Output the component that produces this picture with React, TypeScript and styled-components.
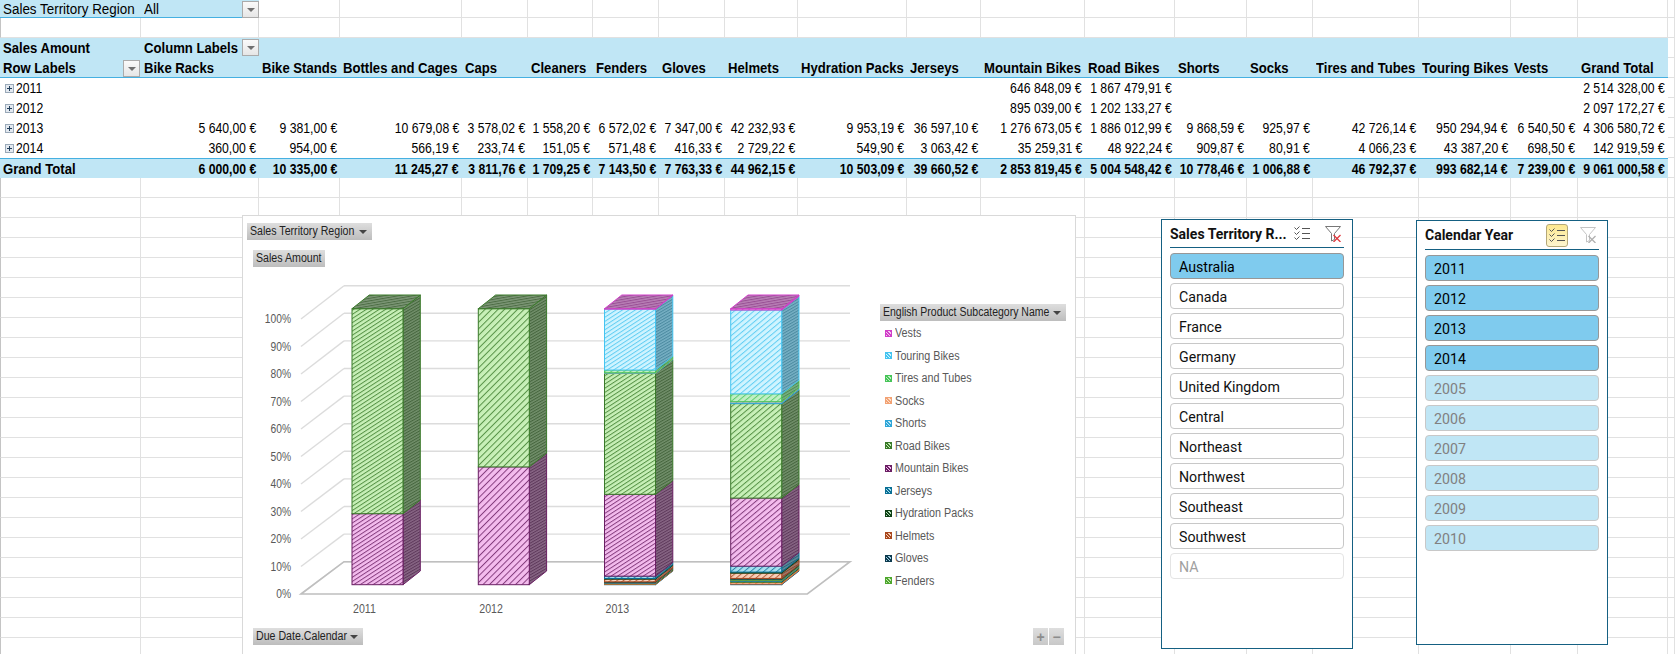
import styled, { createGlobalStyle } from "styled-components";

const BASE_FONT = `"Liberation Sans", Arial, sans-serif`;
const SLICER_FONT = `Roboto, "Liberation Sans", sans-serif`;

const GlobalStyle = createGlobalStyle`
  html, body { margin: 0; background: #fff; overflow: hidden; }
  #root { height: 654px; }
`;

const COLUMN_WIDTHS = [141, 118, 81, 122, 66, 65, 66, 66, 73, 109, 74, 104, 90, 72, 66, 106, 92, 67, 90, 7];
const ROW_COUNT = 33;

const SUBCATEGORIES = [
  "Bike Racks", "Bike Stands", "Bottles and Cages", "Caps", "Cleaners", "Fenders", "Gloves", "Helmets",
  "Hydration Packs", "Jerseys", "Mountain Bikes", "Road Bikes", "Shorts", "Socks", "Tires and Tubes",
  "Touring Bikes", "Vests",
];

const N = "\u00a0";
const e = (v: string) => v.replace(/ /g, N) + N + "€";

const YEARS: { year: string; values: string[]; total: string }[] = [
  {
    year: "2011",
    values: ["", "", "", "", "", "", "", "", "", "", "646 848,09", "1 867 479,91", "", "", "", "", ""],
    total: "2 514 328,00",
  },
  {
    year: "2012",
    values: ["", "", "", "", "", "", "", "", "", "", "895 039,00", "1 202 133,27", "", "", "", "", ""],
    total: "2 097 172,27",
  },
  {
    year: "2013",
    values: ["5 640,00", "9 381,00", "10 679,08", "3 578,02", "1 558,20", "6 572,02", "7 347,00", "42 232,93", "9 953,19", "36 597,10", "1 276 673,05", "1 886 012,99", "9 868,59", "925,97", "42 726,14", "950 294,94", "6 540,50"],
    total: "4 306 580,72",
  },
  {
    year: "2014",
    values: ["360,00", "954,00", "566,19", "233,74", "151,05", "571,48", "416,33", "2 729,22", "549,90", "3 063,42", "35 259,31", "48 922,24", "909,87", "80,91", "4 066,23", "43 387,20", "698,50"],
    total: "142 919,59",
  },
];

const GRAND_TOTALS = ["6 000,00", "10 335,00", "11 245,27", "3 811,76", "1 709,25", "7 143,50", "7 763,33", "44 962,15", "10 503,09", "39 660,52", "2 853 819,45", "5 004 548,42", "10 778,46", "1 006,88", "46 792,37", "993 682,14", "7 239,00"];

const SERIES: Record<string, { line: string; tint: string }> = {
  "Bike Racks": { line: "#156082", tint: "#a8d8ea" },
  "Bike Stands": { line: "#e97132", tint: "#fbd5c0" },
  "Bottles and Cages": { line: "#196b24", tint: "#b0e0b6" },
  Caps: { line: "#0f9ed5", tint: "#b8e6f8" },
  Cleaners: { line: "#a02b93", tint: "#eebce8" },
  Fenders: { line: "#4ea72e", tint: "#c8eab8" },
  Gloves: { line: "#0d3a4e", tint: "#9fcfe4" },
  Helmets: { line: "#a8481e", tint: "#f8cfb8" },
  "Hydration Packs": { line: "#0f4016", tint: "#b5e0bc" },
  Jerseys: { line: "#0a6f95", tint: "#a8e0f0" },
  "Mountain Bikes": { line: "#6a1f63", tint: "#f4bcee" },
  "Road Bikes": { line: "#3a7a2a", tint: "#c8f0b8" },
  Shorts: { line: "#2fa6d8", tint: "#c0e8f8" },
  Socks: { line: "#f2a274", tint: "#fde0cc" },
  "Tires and Tubes": { line: "#47c459", tint: "#c0f0c4" },
  "Touring Bikes": { line: "#45c4f0", tint: "#d0f4ff" },
  Vests: { line: "#d03fc8", tint: "#f6c4f0" },
};

const slug = (s: string) => s.replace(/ /g, "");
const parseAmount = (s: string) => (s ? parseFloat(s.replace(/ /g, "").replace(",", ".")) : 0);

const mix = (a: string, b: string, t: number) => {
  const ch = (h: string, i: number) => parseInt(h.slice(1 + i * 2, 3 + i * 2), 16);
  const out = [0, 1, 2].map((i) => Math.round(ch(a, i) * (1 - t) + ch(b, i) * t));
  return `rgb(${out.join(",")})`;
};

const Sheet = styled.div`
  position: relative;
  width: 1675px;
  height: 654px;
  overflow: hidden;
  display: grid;
  grid-template-columns: ${COLUMN_WIDTHS.map((w) => `${w}px`).join(" ")};
  grid-template-rows: 18px repeat(${ROW_COUNT - 1}, 20px);
  font-family: ${BASE_FONT};
  font-size: 14.67px;
  color: #000;
  background: #fff;
`;

const Cell = styled.div<{ $band?: boolean; $open?: boolean; $bold?: boolean; $right?: boolean; $ruleBottom?: boolean; $ruleTop?: boolean; $edge?: boolean }>`
  position: relative;
  box-sizing: border-box;
  display: flex;
  align-items: center;
  justify-content: ${(p) => (p.$right ? "flex-end" : "flex-start")};
  padding: 0 3px;
  white-space: nowrap;
  font-weight: ${(p) => (p.$bold ? 700 : 400)};
  background: ${(p) => (p.$band ? "#c0e6f5" : "#fff")};
  border-right: ${(p) => (p.$band || p.$open ? "none" : "1px solid #e1e1e1")};
  border-bottom: ${(p) => (p.$ruleBottom ? "1px solid #45b0e1" : p.$band || p.$open ? "none" : "1px solid #e1e1e1")};
  border-top: ${(p) => (p.$ruleTop ? "1px solid #45b0e1" : "none")};
  border-left: ${(p) => (p.$edge ? "1px solid #c4c4c4" : "none")};
`;

/* Aptos Narrow is not installed, so the regular face is squeezed to its widths */
const Squeezed = styled.span<{ $scale: number; $right?: boolean }>`
  display: inline-block;
  flex-shrink: 0;
  transform: scaleX(${(p) => p.$scale});
  transform-origin: ${(p) => (p.$right ? "right" : "left")} center;
`;

const LABEL_SCALE = 0.895;
const FILTER_SCALE = 0.915;
const NUMBER_SCALE = 0.835;

const DropButton = styled.span<{ $right?: number; $top?: number }>`
  position: absolute;
  right: ${(p) => p.$right ?? 0}px;
  top: ${(p) => p.$top ?? 1}px;
  width: 17px;
  height: 17px;
  box-sizing: border-box;
  border: 1px solid #ababab;
  background: linear-gradient(#fafafa, #e6e6e6);
  &::after {
    content: "";
    position: absolute;
    left: 4px;
    top: 6px;
    border-left: 4px solid transparent;
    border-right: 4px solid transparent;
    border-top: 4px solid #707070;
  }
`;

const Expander = styled.span`
  position: relative;
  flex-shrink: 0;
  width: 9px;
  height: 9px;
  box-sizing: border-box;
  margin: 0 2px 0 2px;
  border: 1px solid #9aa9b8;
  background: #e3e9f0;
  &::before {
    content: "";
    position: absolute;
    left: 1px;
    top: 3px;
    width: 5px;
    height: 1px;
    background: #24405c;
  }
  &::after {
    content: "";
    position: absolute;
    left: 3px;
    top: 1px;
    width: 1px;
    height: 5px;
    background: #24405c;
  }
`;

/* Chart */
const ChartFrame = styled.div`
  position: absolute;
  left: 242px;
  top: 215px;
  width: 834px;
  height: 450px;
  box-sizing: border-box;
  background: #fff;
  border: 1px solid #d9d9d9;
`;

const ChartSvg = styled.svg`
  display: block;
  width: 834px;
  height: 450px;
`;

const ValueLabel = styled.text`
  font-family: ${BASE_FONT};
  font-size: 12.5px;
  fill: #595959;
  text-anchor: end;
`;

const YearLabel = styled.text`
  font-family: ${BASE_FONT};
  font-size: 12.5px;
  fill: #595959;
`;

const FieldButton = styled.div<{ $x: number; $y: number; $w: number }>`
  position: absolute;
  left: ${(p) => p.$x - 243}px;
  top: ${(p) => p.$y - 216}px;
  width: ${(p) => p.$w}px;
  height: 17px;
  box-sizing: border-box;
  display: flex;
  align-items: center;
  padding: 0 0 0 3px;
  font-family: ${BASE_FONT};
  font-size: 12.5px;
  line-height: 17px;
  white-space: nowrap;
  color: #222;
  background: linear-gradient(#dedede, #bdbdbd);
`;

const FieldCaret = styled.span`
  position: absolute;
  right: 5px;
  top: 7px;
  width: 0;
  height: 0;
  border-left: 4px solid transparent;
  border-right: 4px solid transparent;
  border-top: 4px solid #444;
`;

const ZoomControls = styled.div`
  position: absolute;
  left: ${1033 - 243}px;
  top: ${628 - 216}px;
  display: flex;
  gap: 1px;
`;

const ZoomButton = styled.div`
  width: 15px;
  height: 17px;
  display: flex;
  align-items: center;
  justify-content: center;
  font-family: ${BASE_FONT};
  font-size: 14px;
  font-weight: 700;
  color: #8c8c8c;
  background: linear-gradient(#dedede, #c8c8c8);
`;

const Legend = styled.ul`
  position: absolute;
  left: ${885 - 243}px;
  top: ${322 - 216}px;
  margin: 0;
  padding: 0;
  list-style: none;
  display: flex;
  flex-direction: column;
`;

const LegendItem = styled.li`
  height: 22.5px;
  display: flex;
  align-items: center;
  gap: 3px;
  font-family: ${BASE_FONT};
  font-size: 12.5px;
  color: #595959;
  white-space: nowrap;
`;

const LegendSwatch = styled.span<{ $line: string; $tint: string }>`
  flex-shrink: 0;
  width: 7px;
  height: 7px;
  box-sizing: border-box;
  border: 1px solid ${(p) => p.$line};
  background: repeating-linear-gradient(45deg, ${(p) => p.$tint} 0 1px, ${(p) => p.$line} 1px 2.4px);
`;

/* Slicers */
const Slicer = styled.section<{ $x: number; $y: number; $h: number }>`
  position: absolute;
  left: ${(p) => p.$x}px;
  top: ${(p) => p.$y}px;
  width: 192px;
  height: ${(p) => p.$h}px;
  box-sizing: border-box;
  padding: 0 8px;
  background: #fff;
  border: 1px solid #156082;
  font-family: ${SLICER_FONT};
  color: #111;
`;

const SlicerHeader = styled.header<{ $h: number }>`
  height: ${(p) => p.$h}px;
  margin-bottom: 5px;
  box-sizing: border-box;
  display: flex;
  align-items: center;
  gap: 9px;
  border-bottom: 1px solid #156082;
`;

const SlicerTitle = styled.div`
  flex: 1 1 0;
  min-width: 0;
  font-size: 14px;
  font-weight: 700;
  white-space: nowrap;
`;

const ToolButton = styled.div<{ $on?: boolean }>`
  flex-shrink: 0;
  width: 22px;
  height: 23px;
  box-sizing: border-box;
  display: flex;
  align-items: center;
  justify-content: center;
  border-radius: 3px;
  border: 1px solid ${(p) => (p.$on ? "#b5a878" : "transparent")};
  background: ${(p) => (p.$on ? "linear-gradient(#fde88f, #fdf5d0)" : "transparent")};
`;

const SlicerList = styled.div`
  display: flex;
  flex-direction: column;
  gap: 4px;
`;

type ItemState = "selected" | "off" | "stale" | "nodata";

const ITEM_STYLES: Record<ItemState, { bg: string; border: string; color: string }> = {
  selected: { bg: "#7fcbee", border: "#979797", color: "#000" },
  off: { bg: "#fff", border: "#c8c8c8", color: "#111" },
  stale: { bg: "#c0e6f5", border: "#c8c8c8", color: "#808080" },
  nodata: { bg: "#fff", border: "#e4e4e4", color: "#a0a0a0" },
};

const SlicerItem = styled.div<{ $state: ItemState }>`
  height: 26px;
  box-sizing: border-box;
  display: flex;
  align-items: center;
  padding: 1px 8px 0;
  font-size: 14.2px;
  border-radius: 4px;
  border: 1px solid ${(p) => ITEM_STYLES[p.$state].border};
  background: ${(p) => ITEM_STYLES[p.$state].bg};
  color: ${(p) => ITEM_STYLES[p.$state].color};
`;

const MultiSelectIcon = () => (
  <svg width="16" height="15" viewBox="0 0 16 15" fill="none" stroke="#555" strokeWidth="1">
    <path d="M0.5 1.5l2 2 3-3M0.5 6.5l2 2 3-3M0.5 11.5l2 2 3-3" />
    <path d="M8 2.5h8M8 7.5h8M8 12.5h8" />
  </svg>
);

const ClearFilterIcon = ({ muted }: { muted?: boolean }) => (
  <svg width="16" height="16" viewBox="0 0 16 16" fill="none">
    <path d="M0.5 0.5H15.5L9.5 7.5V13.5L6.5 15V7.5Z" stroke={muted ? "#c4c4c4" : "#777"} fill="#fff" />
    <path d="M8.5 9l7 7M15.5 9l-7 7" stroke={muted ? "#b0b0b0" : "#e0393e"} strokeWidth="1.3" />
  </svg>
);

/* chart geometry, in page coordinates */
const BAR_BOTTOM = 584.7;
const BAR_HEIGHT = 276;
const BAR_WIDTH = 51;
const DEPTH_X = 17.3;
const DEPTH_Y = 13.7;
const BAR_X = [352, 478.3, 604.5, 730.7];
const HATCH_ANGLE = [-33, -45, -33, -40];
const HATCH_PERIOD = [3.5, 4.6, 3.5, 4.2];
const WALL_LEFT = 344;
const WALL_RIGHT = 850;
const FRONT_LEFT = 301;
const WALL_TOP = 285.7;
const WALL_STEP = 27.6;
const FRONT_TOP = 319;

const TICKS = Array.from({ length: 11 }, (_, i) => i);

const StackedChart = () => {
  const bars = YEARS.map((y) => {
    const amounts = y.values.map(parseAmount);
    const total = amounts.reduce((a, b) => a + b, 0);
    let base = BAR_BOTTOM;
    return SUBCATEGORIES.map((name, i) => {
      const h = (amounts[i] / total) * BAR_HEIGHT;
      const seg = { name, top: base - h, bottom: base, h };
      base -= h;
      return seg;
    }).filter((s) => s.h > 0);
  });

  return (
    <ChartSvg viewBox="243 216 834 450">
      <defs>
        {SUBCATEGORIES.map((name) => {
          const { line, tint } = SERIES[name];
          return (
            <g key={name}>
              {HATCH_ANGLE.map((a, b) => (
                <pattern
                  key={b}
                  id={`front-${slug(name)}-${b}`}
                  patternUnits="userSpaceOnUse"
                  width={HATCH_PERIOD[b]}
                  height={HATCH_PERIOD[b]}
                  patternTransform={`rotate(${a})`}
                >
                  <rect width={HATCH_PERIOD[b]} height={HATCH_PERIOD[b]} fill={tint} />
                  <rect width={HATCH_PERIOD[b]} height="1" fill={mix(line, tint, 0.2)} />
                </pattern>
              ))}
              <pattern id={`side-${slug(name)}`} patternUnits="userSpaceOnUse" width="2.5" height="2.5" patternTransform="rotate(-30)">
                <rect width="2.5" height="2.5" fill={mix(line, "#a0a0a0", 0.55)} />
                <rect width="2.5" height="1" fill={mix(line, "#505050", 0.5)} />
              </pattern>
              <pattern id={`top-${slug(name)}`} patternUnits="userSpaceOnUse" width="2.5" height="2.5" patternTransform="rotate(-10)">
                <rect width="2.5" height="2.5" fill={mix(line, "#a8a8a8", 0.6)} />
                <rect width="2.5" height="1" fill={mix(line, "#606060", 0.5)} />
              </pattern>
            </g>
          );
        })}
      </defs>

      {TICKS.map((i) => {
        const wallY = WALL_TOP + i * WALL_STEP;
        const frontY = FRONT_TOP + i * 27.5;
        return (
          <g key={i} stroke="#dcdcdc" strokeWidth="1.4">
            <line x1={WALL_LEFT} y1={wallY} x2={WALL_RIGHT} y2={wallY} />
            <line x1={FRONT_LEFT} y1={frontY} x2={WALL_LEFT} y2={wallY} />
          </g>
        );
      })}
      <path d="M301 594 L344 561.7 H850 L807.3 594 Z" fill="none" stroke="#bfbfbf" strokeWidth="1.6" />

      {TICKS.map((i) => (
        <ValueLabel key={i} transform={`translate(291 ${FRONT_TOP + i * 27.5 + 4}) scale(.82 1)`}>
          {100 - i * 10}%
        </ValueLabel>
      ))}

      {bars.map((segments, b) => {
        const x = BAR_X[b];
        const right = x + BAR_WIDTH;
        const last = segments[segments.length - 1];
        return (
          <g key={b}>
            {segments.map((s) => {
              const { line } = SERIES[s.name];
              return (
                <g key={s.name} stroke={line} strokeWidth="1">
                  <polygon
                    points={`${right},${s.bottom} ${right + DEPTH_X},${s.bottom - DEPTH_Y} ${right + DEPTH_X},${s.top - DEPTH_Y} ${right},${s.top}`}
                    fill={`url(#side-${slug(s.name)})`}
                  />
                  <rect x={x} y={s.top} width={BAR_WIDTH} height={s.h} fill={`url(#front-${slug(s.name)}-${b})`} />
                </g>
              );
            })}
            <polygon
              points={`${x},${last.top} ${right},${last.top} ${right + DEPTH_X},${last.top - DEPTH_Y} ${x + DEPTH_X},${last.top - DEPTH_Y}`}
              fill={`url(#top-${slug(last.name)})`}
              stroke={SERIES[last.name].line}
              strokeWidth="1"
            />
            <YearLabel transform={`translate(${x + 1} 613) scale(.85 1)`}>{YEARS[b].year}</YearLabel>
          </g>
        );
      })}
    </ChartSvg>
  );
};

const REGIONS: [string, ItemState][] = [
  ["Australia", "selected"],
  ["Canada", "off"],
  ["France", "off"],
  ["Germany", "off"],
  ["United Kingdom", "off"],
  ["Central", "off"],
  ["Northeast", "off"],
  ["Northwest", "off"],
  ["Southeast", "off"],
  ["Southwest", "off"],
  ["NA", "nodata"],
];

const CALENDAR: [string, ItemState][] = [
  ["2011", "selected"],
  ["2012", "selected"],
  ["2013", "selected"],
  ["2014", "selected"],
  ["2005", "stale"],
  ["2006", "stale"],
  ["2007", "stale"],
  ["2008", "stale"],
  ["2009", "stale"],
  ["2010", "stale"],
];

const Label = ({ children }: { children: string }) => <Squeezed $scale={LABEL_SCALE}>{children}</Squeezed>;
const Amount = ({ children }: { children: string }) => (
  <Squeezed $scale={NUMBER_SCALE} $right>{children}</Squeezed>
);

const Row = ({ year, values, total }: { year: string; values: string[]; total: string }) => (
  <>
    <Cell $open>
      <Expander />
      <Squeezed $scale={NUMBER_SCALE}>{year}</Squeezed>
    </Cell>
    {values.map((v, i) => (
      <Cell key={i} $open $right>{v ? <Amount>{e(v)}</Amount> : null}</Cell>
    ))}
    <Cell $open $right><Amount>{e(total)}</Amount></Cell>
    <Cell />
  </>
);

const PivotCells = () => {
  const blanks = (row: number, from: number) =>
    COLUMN_WIDTHS.slice(from).map((_, i) => <Cell key={`${row}-${from + i}`} $edge={from + i === 0} />);
  const bandBlanks = (row: number, from: number) =>
    COLUMN_WIDTHS.slice(from, 19).map((_, i) => <Cell key={`${row}-${from + i}`} $band />);

  const grid = [];
  for (let r = 9; r < ROW_COUNT; r++) grid.push(...blanks(r, 0));

  return (
    <>
      <Cell $band $ruleBottom><Squeezed $scale={FILTER_SCALE}>Sales Territory Region</Squeezed></Cell>
      <Cell $band $ruleBottom>
        <Squeezed $scale={FILTER_SCALE}>All</Squeezed>
        <DropButton />
      </Cell>
      {blanks(0, 2)}
      {blanks(1, 0)}

      <Cell $band $bold><Label>Sales Amount</Label></Cell>
      <Cell $band $bold>
        <Label>Column Labels</Label>
        <DropButton />
      </Cell>
      {bandBlanks(2, 2)}
      <Cell />

      <Cell $band $bold $ruleBottom>
        <Label>Row Labels</Label>
        <DropButton $right={1} $top={2} />
      </Cell>
      {[...SUBCATEGORIES, "Grand Total"].map((name) => (
        <Cell key={name} $band $bold $ruleBottom><Label>{name}</Label></Cell>
      ))}
      <Cell />

      {YEARS.map((y) => (
        <Row key={y.year} year={y.year} values={y.values} total={y.total} />
      ))}

      <Cell $band $bold $ruleTop><Label>Grand Total</Label></Cell>
      {GRAND_TOTALS.map((v, i) => (
        <Cell key={i} $band $bold $ruleTop $right><Amount>{e(v)}</Amount></Cell>
      ))}
      <Cell $band $bold $ruleTop $right><Amount>{e("9 061 000,58")}</Amount></Cell>
      <Cell />

      {grid}
    </>
  );
};

const App = () => {
  return (
    <Sheet>
      <GlobalStyle />
      <PivotCells />

      <ChartFrame>
        <StackedChart />
        <FieldButton $x={247} $y={223} $w={125}>
          <Squeezed $scale={0.85}>Sales Territory Region</Squeezed>
          <FieldCaret />
        </FieldButton>
        <FieldButton $x={253} $y={250} $w={72}>
          <Squeezed $scale={0.85}>Sales Amount</Squeezed>
        </FieldButton>
        <FieldButton $x={253} $y={628} $w={110}>
          <Squeezed $scale={0.85}>Due Date.Calendar</Squeezed>
          <FieldCaret />
        </FieldButton>
        <FieldButton $x={880} $y={304} $w={186}>
          <Squeezed $scale={0.84}>English Product Subcategory Name</Squeezed>
          <FieldCaret />
        </FieldButton>
        <Legend>
          {[...SUBCATEGORIES].reverse().slice(0, 12).map((name) => (
            <LegendItem key={name}>
              <LegendSwatch $line={SERIES[name].line} $tint={SERIES[name].tint} />
              <Squeezed $scale={0.86}>{name}</Squeezed>
            </LegendItem>
          ))}
        </Legend>
        <ZoomControls>
          <ZoomButton>+</ZoomButton>
          <ZoomButton>−</ZoomButton>
        </ZoomControls>
      </ChartFrame>

      <Slicer $x={1161} $y={219} $h={430}>
        <SlicerHeader $h={28}>
          <SlicerTitle>Sales Territory R...</SlicerTitle>
          <ToolButton><MultiSelectIcon /></ToolButton>
          <ToolButton><ClearFilterIcon /></ToolButton>
        </SlicerHeader>
        <SlicerList>
          {REGIONS.map(([label, state]) => (
            <SlicerItem key={label} $state={state}>{label}</SlicerItem>
          ))}
        </SlicerList>
      </Slicer>

      <Slicer $x={1416} $y={220} $h={425}>
        <SlicerHeader $h={29}>
          <SlicerTitle>Calendar Year</SlicerTitle>
          <ToolButton $on><MultiSelectIcon /></ToolButton>
          <ToolButton><ClearFilterIcon muted /></ToolButton>
        </SlicerHeader>
        <SlicerList>
          {CALENDAR.map(([label, state]) => (
            <SlicerItem key={label} $state={state}>{label}</SlicerItem>
          ))}
        </SlicerList>
      </Slicer>
    </Sheet>
  );
};

export default App;
